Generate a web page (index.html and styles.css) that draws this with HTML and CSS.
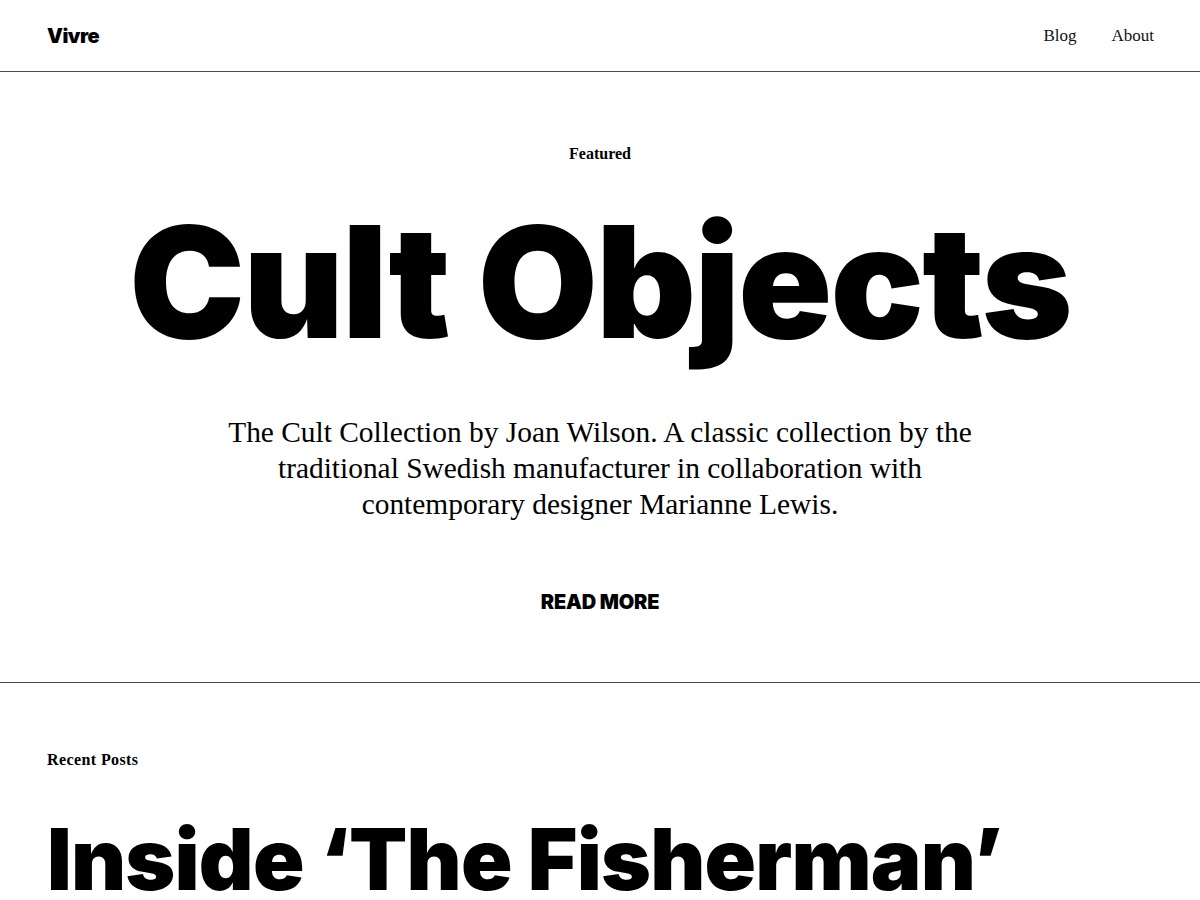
FILE: index.html
```html
<!DOCTYPE html>
<html lang="en">
<head>
<meta charset="utf-8">
<title>Vivre</title>
<link rel="stylesheet" href="styles.css">
</head>
<body>
<header class="site-header">
  <a class="logo" href="#">Vivre</a>
  <nav class="nav">
    <a href="#">Blog</a>
    <a href="#">About</a>
  </nav>
</header>
<section class="hero">
  <p class="label">Featured</p>
  <h1 class="hero-title">Cult Objects</h1>
  <p class="hero-text">The Cult Collection by Joan Wilson. A classic collection by the traditional Swedish manufacturer in collaboration with contemporary designer Marianne Lewis.</p>
  <a class="read-more" href="#">READ MORE</a>
</section>
<section class="recent">
  <p class="label label-wide">Recent Posts</p>
  <h2 class="post-title">Inside ‘The Fisherman’</h2>
</section>
</body>
</html>
```
FILE: styles.css
```css
* { box-sizing: border-box; }
html, body { margin: 0; padding: 0; background: #fff; }
body {
  font-family: "Liberation Serif", "DejaVu Serif", serif;
  color: #000;
}
a { color: inherit; text-decoration: none; }
p { margin: 0; }

.site-header {
  display: flex;
  justify-content: space-between;
  align-items: center;
  height: 72px;
  padding: 0 46px 0 47px;
  border-bottom: 1px solid #4a4a4a;
}
.logo {
  font-family: "Inter", sans-serif;
  font-weight: 900;
  font-size: 20px;
  letter-spacing: -0.5px;
}
.nav {
  display: flex;
  gap: 35px;
  font-size: 17px;
  color: #111;
}

.hero {
  text-align: center;
  padding: 72px 0 68px;
  border-bottom: 1px solid #4a4a4a;
  display: flex;
  flex-direction: column;
  align-items: center;
}
.label {
  font-size: 16px;
  font-weight: 700;
  line-height: 20px;
}
.label-wide {
  letter-spacing: 0.4px;
}
.hero-title {
  margin: 40px 0 0;
  font-family: "Inter", sans-serif;
  font-weight: 900;
  font-size: 155px;
  line-height: 1;
  letter-spacing: -1.8px;
}
.hero-text {
  margin-top: 55px;
  max-width: 790px;
  font-size: 29.4px;
  line-height: 36px;
}
.read-more {
  margin-top: 68px;
  font-family: "Inter", sans-serif;
  font-weight: 900;
  font-size: 20px;
  line-height: 24px;
  letter-spacing: -0.2px;
}

.recent {
  padding: 67px 47px 0;
}
.post-title {
  margin: 47px 0 0;
  font-family: "Inter", sans-serif;
  font-weight: 900;
  font-size: 85px;
  line-height: 1;
  letter-spacing: -0.8px;
  white-space: nowrap;
}
```
